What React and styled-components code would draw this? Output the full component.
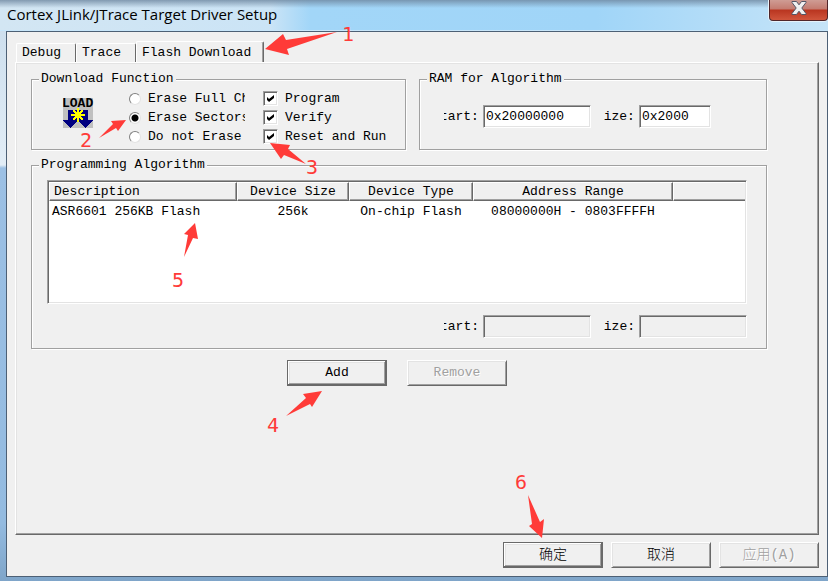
import React, { useState } from 'react'
import styled, { createGlobalStyle, css } from 'styled-components'

const GlobalStyle = createGlobalStyle`
  *, *::before, *::after {
    box-sizing: border-box;
  }
  body {
    margin: 0;
    background: #f0f0f0;
  }
  body, button, input {
    font-family: 'Liberation Mono', 'Noto Sans CJK SC', monospace;
    font-size: 13px;
    line-height: 16px;
    color: #000;
  }
`

const sunken = css`
  border: 1px solid;
  border-color: #a0a0a0 #fff #fff #a0a0a0;
  box-shadow: inset 1px 1px 0 #696969, inset -1px -1px 0 #e3e3e3;
`

const algorithms = [
  {
    description: 'ASR6601 256KB Flash',
    size: '256k',
    type: 'On-chip Flash',
    range: '08000000H - 0803FFFFH',
  },
]

const eraseModes = ['Erase Full Chip', 'Erase Sectors', 'Do not Erase']
const actions = ['Program', 'Verify', 'Reset and Run']
const tabs = ['Debug', 'Trace', 'Flash Download']

const arrows = [
  '265,49 283,34 286,40 337,32 287,49 289,55',
  '126,120 111,121 113,124 99,138 116,128 118,131',
  '270,143 290,145 288,149 306,164 284,155 281,159',
  '322,391 303,394 306,398 286,416 310,404 312,407',
  '195,223 184,234 188,235 184,257 193,238 198,239',
  '542,538 529,526 532,524 528,495 540,522 544,519',
]

const steps = [
  [342, 41],
  [80, 147],
  [306, 174],
  [267, 432],
  [172, 287],
  [515, 489],
]

const LoadIcon = () => (
  <svg width="32" height="32" viewBox="-1 -1 32 32" role="img" aria-label="Load">
    <rect width="30" height="30" fill="#c0c0c0" />
    <path
      d="M5 12H25V22H30V23H29V24H28V25H27V26H26V27H25V28H24V29H23V30H22V29H21V28H20V27H19V26H18V25H17V24H16V22H14V24H13V25H12V26H11V27H10V28H9V29H8V30H7V29H6V28H5V27H4V26H3V25H2V24H1V23H0V22H5Z"
      fill="#000080"
    />
    <path
      d="M14 10h2v4h1v-1h1v-1h2v2h-1v1h-1v1h4v2h-4v1h1v1h1v2h-2v-1h-1v-1h-1v4h-2v-4h-1v1h-1v1h-2v-2h1v-1h1v-1H8v-2h4v-1h-1v-1h-1v-2h2v1h1v1h1z"
      fill="#ff0"
    />
    <text x="-1" y="9" fontSize="13" fontWeight="700">
      LOAD
    </text>
  </svg>
)

const CloseIcon = () => (
  <svg width="16" height="14" viewBox="0 0 16 14" aria-hidden="true">
    <path
      d="M1 .5h4.5L8 3.8 10.500 .5H15v1L10.800 7l4.200 5.500v1h-4.500L8 10.200 5.500 13.500H1v-1L5.200 7 1 1.500z"
      fill="#f0f0f0"
      stroke="#535666"
    />
  </svg>
)

const App = () => {
  const [erase, setErase] = useState('Erase Sectors')

  return (
    <Window>
      <GlobalStyle />
      <TitleBar>
        <Title>Cortex JLink/JTrace Target Driver Setup</Title>
        <CloseButton aria-label="Close">
          <CloseIcon />
        </CloseButton>
      </TitleBar>
      <Client>
        <TabList role="tablist">
          {tabs.map((tab) => (
            <Tab
              key={tab}
              role="tab"
              aria-selected={tab === 'Flash Download'}
              $active={tab === 'Flash Download'}
            >
              {tab}
            </Tab>
          ))}
        </TabList>
        <Panel role="tabpanel">
          <GroupRow>
            <Group $grow={375}>
              <legend>Download Function</legend>
              <DownloadOptions>
                <LoadIcon />
                <Options $clip>
                  {eraseModes.map((mode) => (
                    <Option key={mode}>
                      <Radio
                        type="radio"
                        name="erase"
                        checked={erase === mode}
                        onChange={() => setErase(mode)}
                      />
                      <span>{mode}</span>
                    </Option>
                  ))}
                </Options>
                <Options>
                  {actions.map((action) => (
                    <Option key={action}>
                      <Checkbox type="checkbox" defaultChecked />
                      <span>{action}</span>
                    </Option>
                  ))}
                </Options>
              </DownloadOptions>
            </Group>
            <Group $grow={348}>
              <legend>RAM for Algorithm</legend>
              <RamFields>
                <FieldLabel htmlFor="ram-start" $width={35}>
                  Start:
                </FieldLabel>
                <Field id="ram-start" defaultValue="0x20000000" $width={108} />
                <FieldLabel htmlFor="ram-size" $width={31}>
                  Size:
                </FieldLabel>
                <Field id="ram-size" defaultValue="0x2000" $width={72} />
              </RamFields>
            </Group>
          </GroupRow>
          <Group>
            <legend>Programming Algorithm</legend>
            <ListBox>
              <Table>
                <colgroup>
                  <col width="188" />
                  <col width="112" />
                  <col width="124" />
                  <col width="200" />
                  <col />
                </colgroup>
                <thead>
                  <tr>
                    <th>Description</th>
                    <th>Device Size</th>
                    <th>Device Type</th>
                    <th>Address Range</th>
                    <th aria-label="Empty" />
                  </tr>
                </thead>
                <tbody>
                  {algorithms.map(({ description, size, type, range }) => (
                    <tr key={description}>
                      <td>{description}</td>
                      <td>{size}</td>
                      <td>{type}</td>
                      <td>{range}</td>
                      <td />
                    </tr>
                  ))}
                </tbody>
              </Table>
            </ListBox>
            <AlgorithmFields>
              <FieldLabel htmlFor="alg-start" $width={35}>
                Start:
              </FieldLabel>
              <Field id="alg-start" disabled $width={108} />
              <FieldLabel htmlFor="alg-size" $width={31}>
                Size:
              </FieldLabel>
              <Field id="alg-size" disabled $width={108} />
            </AlgorithmFields>
          </Group>
          <ListActions>
            <Button $primary>Add</Button>
            <Button disabled>Remove</Button>
          </ListActions>
        </Panel>
        <Footer>
          <Button $primary $large>
            确定
          </Button>
          <Button $large>取消</Button>
          <Button $large disabled>
            应用(A)
          </Button>
        </Footer>
      </Client>
      <Annotations viewBox="0 0 828 581" width="828" height="581">
        {arrows.map((points) => (
          <polygon key={points} points={points} />
        ))}
        {steps.map(([x, y], index) => (
          <text key={index} x={x} y={y}>
            {index + 1}
          </text>
        ))}
      </Annotations>
    </Window>
  )
}

const Window = styled.main`
  position: relative;
  min-height: 100vh;
  display: flex;
  flex-direction: column;
  padding: 0 0 4px 6px;
  overflow: hidden;
  background: linear-gradient(
    180deg,
    #c9dcec 0,
    #e2edf6 165px,
    #9cc0e4 168px,
    #94bbe0 90%,
    #7fa5c9 100%
  );
`

const TitleBar = styled.header`
  display: flex;
  justify-content: space-between;
  align-items: flex-start;
  height: 31px;
  margin-left: -6px;
  padding-left: 7px;
  border-bottom: 1px solid #c8e6fa;
  background:
    linear-gradient(180deg, rgba(110, 135, 160, 0.8) 0, rgba(110, 135, 160, 0) 8px),
    linear-gradient(90deg, #d3e6f3 0, #cbe4f6 270px, #a2d6f8 310px, #a0d5f8 72%, #c6e4f8 100%);
`

const Title = styled.h1`
  margin: 0;
  font: 400 15px/28px 'Open Sans', sans-serif;
  white-space: nowrap;
`

const CloseButton = styled.button`
  display: flex;
  align-items: center;
  justify-content: center;
  width: 59px;
  height: 21px;
  padding: 0 0 4px;
  border: 1px solid #50262a;
  border-top: 0;
  border-radius: 0 0 4px 4px;
  background: linear-gradient(180deg, #cf9c94 0, #c47b70 9px, #b93520 10px, #d0553c 100%);
  box-shadow: 0 0 0 1px #e6f2fa;
`

const Client = styled.div`
  flex: 1;
  display: flex;
  flex-direction: column;
  padding: 9px 8px 8px;
  border: 1px solid #4d6075;
  background: #f0f0f0;
`

const TabList = styled.div`
  display: flex;
  align-items: flex-end;
  height: 21px;
  padding-left: 1px;
`

const Tab = styled.button`
  width: ${({ $active }) => ($active ? '128px' : '60px')};
  height: ${({ $active }) => ($active ? '22px' : '19px')};
  margin-bottom: ${({ $active }) => ($active ? '-1px' : '0')};
  padding: 0 0 0 5px;
  border: 1px solid;
  border-color: #fff #696969 transparent #fff;
  border-bottom: 0;
  border-radius: 2px 2px 0 0;
  background: #f0f0f0;
  box-shadow: ${({ $active }) => ($active ? 'inset -1px 0 0 #a0a0a0' : 'none')};
  text-align: left;
  white-space: nowrap;
`

const Panel = styled.section`
  flex: 1;
  display: flex;
  flex-direction: column;
  padding: 8px 51px 16px 15px;
  border: 1px solid;
  border-color: #fff #696969 #696969 #fff;
  box-shadow: inset -1px -1px 0 #a0a0a0, inset 1px 1px 0 #e3e3e3;
`

const GroupRow = styled.div`
  display: flex;
  gap: 13px;
  margin-bottom: 7px;
`

const Group = styled.fieldset`
  flex: ${({ $grow }) => ($grow ? `${$grow} 1 0` : 'none')};
  min-width: 0;
  margin: 0;
  padding: 0;
  border: 1px solid #a0a0a0;
  box-shadow: 1px 1px 0 #fff, inset 1px 1px 0 #fff;

  legend {
    margin-left: 7px;
    padding: 0 2px;
    background: #f0f0f0;
  }
`

const DownloadOptions = styled.div`
  display: flex;
  height: 62px;
  padding-left: 30px;

  > svg {
    flex: none;
    margin: 10px 35px 0 0;
  }
`

const Options = styled.div`
  width: ${({ $clip }) => ($clip ? '116px' : 'auto')};
  margin-right: ${({ $clip }) => ($clip ? '18px' : '0')};
  padding-top: 2px;
  overflow: hidden;
`

const Option = styled.label`
  display: flex;
  align-items: center;
  gap: 7px;
  height: 19px;
  white-space: nowrap;
`

const Radio = styled.input`
  appearance: none;
  flex: none;
  width: 12px;
  height: 12px;
  margin: 0;
  border: 1px solid;
  border-color: #808080 #e3e3e3 #e3e3e3 #808080;
  border-radius: 50%;
  background: #fff;

  &:checked {
    background: radial-gradient(circle, #000 0 3px, #fff 4px);
  }
`

const Checkbox = styled.input`
  appearance: none;
  flex: none;
  width: 15px;
  height: 15px;
  margin: 0;
  background: #fff;
  ${sunken}

  &:checked::after {
    content: '';
    display: block;
    width: 7px;
    height: 7px;
    margin: 3px;
    background: #000;
    clip-path: polygon(0 29%, 29% 57%, 100% 0, 100% 43%, 29% 100%, 0 71%);
  }
`

const fieldRow = css`
  display: flex;
  align-items: center;
  gap: 4px;
`

const RamFields = styled.div`
  ${fieldRow}
  padding: 18px 0 0 24px;
`

const AlgorithmFields = styled.div`
  ${fieldRow}
  justify-content: flex-end;
  padding: 11px 19px 10px 0;
`

// too narrow for its caption, so the first letters are cut off
const FieldLabel = styled.label`
  display: flex;
  justify-content: flex-end;
  width: ${({ $width }) => $width}px;
  overflow: hidden;

  input + & {
    margin-left: 9px;
  }
`

const Field = styled.input`
  width: ${({ $width }) => $width}px;
  height: 23px;
  padding: 0 2px;
  border-radius: 0;
  background: #fff;
  ${sunken}

  &:disabled {
    background: #f0f0f0;
  }
`

const ListBox = styled.div`
  height: 124px;
  margin: 7px 19px 0 15px;
  padding: 1px;
  background: #fff;
  ${sunken}
`

const Table = styled.table`
  width: 100%;
  table-layout: fixed;
  border-collapse: separate;
  border-spacing: 0;

  th {
    height: 19px;
    padding: 0;
    border: 1px solid;
    border-color: #fff #696969 #696969 #fff;
    background: #f0f0f0;
    box-shadow: inset -1px -1px 0 #a0a0a0;
    font-weight: 400;
  }
  td {
    height: 22px;
    padding: 0;
    text-align: center;
  }
  th:first-child {
    padding-left: 4px;
    text-align: left;
  }
  td:first-child {
    padding-left: 3px;
    text-align: left;
  }
  th:last-child {
    border-right: 0;
    box-shadow: inset 0 -1px 0 #a0a0a0;
  }
`

const ListActions = styled.div`
  display: flex;
  justify-content: center;
  gap: 20px;
  margin-top: 11px;
  padding-right: 4px;
`

const Footer = styled.footer`
  display: flex;
  justify-content: flex-end;
  gap: 8px;
  margin-top: 7px;
`

const Button = styled.button`
  width: 100px;
  height: 26px;
  padding: 0;
  border: 1px solid;
  border-color: #fff #696969 #696969 #fff;
  border-radius: 0;
  background: #f0f0f0;
  box-shadow: inset 1px 1px 0 #e3e3e3, inset -1px -1px 0 #a0a0a0;
  font-size: ${({ $large }) => ($large ? '14px' : '13px')};
  font-weight: 300;

  ${({ $primary }) =>
    $primary &&
    css`
      border-color: #696969;
      box-shadow: inset -1px -1px 0 #696969, inset 1px 1px 0 #fff,
        inset -2px -2px 0 #a0a0a0, inset 2px 2px 0 #e3e3e3;
    `}

  &:disabled {
    color: #a0a0a0;
    text-shadow: 1px 1px 0 #fff;
  }
`

const Annotations = styled.svg`
  position: absolute;
  top: 0;
  left: 0;
  fill: #ff3b38;
  font: 20px 'DejaVu Sans Mono', monospace;
  pointer-events: none;
`

export default App
